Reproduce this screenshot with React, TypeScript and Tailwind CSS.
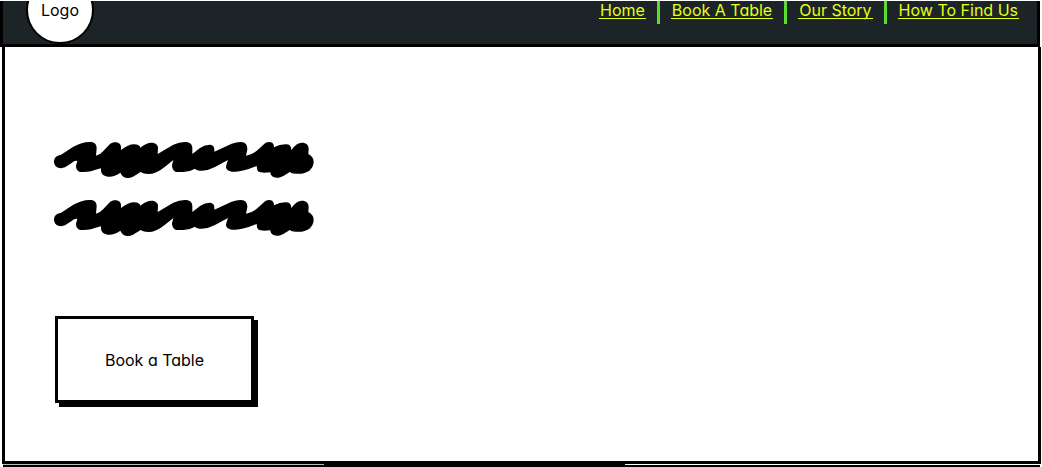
import React from "react";

const links = ["Home", "Book A Table", "Our Story", "How To Find Us"];

function Scribble() {
  return (
    <svg className="block h-[38px] w-[260px]" viewBox="42 33 780 114" aria-hidden="true">
      <path d="M42 95 C42 84 50 76 62 75 L100 50 Q128 35 150 36 C165 36 170 44 170 55 L168 77 Q181 74 190 63 L210 42 C220 33 243 34 243 51 L243 60 Q265 43 282 43 C294 43 300 48 301 53 Q320 38 334 38 C348 38 354 46 354 53 L353 72 L400 44 Q420 35 438 36 C452 37 457 46 457 54 L457 72 L480 54 Q496 43 512 44 C521 46 524 52 523 65 L575 41 Q596 34 609 37 C619 40 622 48 622 58 L618 77 Q638 73 652 61 L676 39 Q686 34 697 38 Q702 43 702 52 Q720 42 740 43 C750 44 754 50 754 60 Q770 38 785 38 C800 38 806 46 806 57 L805 72 C815 78 821 85 821 95 C821 107 815 116 808 122 Q792 133 770 131 Q756 132 749 126 Q725 143 715 143 C700 145 691 137 691 127 C664 130 651 128 651 115 L650 108 Q606 126 584 125 C566 126 558 118 558 110 Q559 103 564 90 L525 111 Q505 122 485 122 Q470 122 465 116 Q448 126 430 126 L408 126 C400 123 396 115 396 106 L400 90 L375 110 Q348 132 325 132 Q310 132 302 126 L279 140 C262 148 247 143 241 128 Q222 142 203 140 C190 139 183 130 183 121 L183 115 Q165 119 153 124 Q138 127 122 126 C112 124 108 116 108 107 L112 93 Q104 91 95 99 L75 112 C58 119 42 110 42 95Z" />
    </svg>
  );
}

export default function App() {
  return (
    <div className="bg-white pt-px font-['Inter','Liberation_Sans',sans-serif] text-[16px] leading-5 text-black [font-feature-settings:'cv11']">
      <header className="mr-0.5 flex h-[46px] items-end justify-between overflow-hidden border-r-[3px] border-b-[3px] border-l-[3px] border-black bg-[#1c2427] pr-[18px] pl-[23px]">
        <div className="flex size-[68px] shrink-0 items-center justify-center rounded-full border-2 border-black bg-white leading-4">
          Logo
        </div>
        <nav className="self-start">
          <ul className="flex">
            {links.map((label, i) => (
              <li
                key={label}
                className={
                  i === 0
                    ? "h-[23px] pr-[11px]"
                    : i === links.length - 1
                      ? "h-[23px] border-l-[3px] border-[#59df2b] pl-[11px]"
                      : "h-[23px] border-l-[3px] border-[#59df2b] px-[11px]"
                }
              >
                <a href="#" className="block h-[18px] border-b border-[#e7ff14] px-px leading-[18px] whitespace-nowrap text-[#e7ff14]">
                  {label}
                </a>
              </li>
            ))}
          </ul>
        </nav>
      </header>
      <main className="mr-px ml-0.5 border-r-[3px] border-b-[3px] border-l-[3px] border-black px-[49px] pt-[94px] pb-[58px]">
        <div className="flex flex-col gap-5">
          <Scribble />
          <Scribble />
        </div>
        <button
          type="button"
          className="mt-[79px] ml-px flex h-[87px] w-[199px] items-center justify-center border-[3px] border-black bg-white shadow-[4px_4px_0_0_#000]"
        >
          Book a Table
        </button>
      </main>
      <div className="mr-0.5 ml-[3px] flex h-px">
        <div className="w-[31%] bg-[#bbb]" />
        <div className="w-[29%] bg-black" />
      </div>
      <div className="mr-0.5 ml-[3px] h-0.5 bg-black" />
    </div>
  );
}
